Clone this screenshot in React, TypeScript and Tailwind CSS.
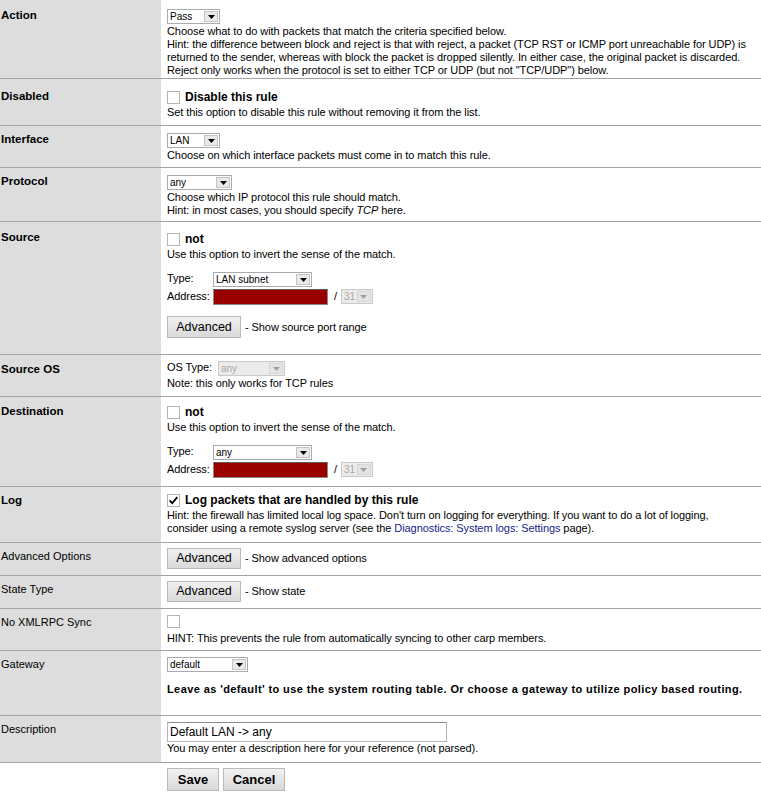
import React from "react";

type SelectProps = {
  value: string;
  className: string;
  disabled?: boolean;
};

function Select({ value, className, disabled }: SelectProps) {
  return (
    <div
      className={`flex h-[15px] shrink-0 items-stretch border text-[10px] leading-[13px] tracking-normal ${
        disabled ? "border-[#c9c9c9] bg-[#ebebeb] text-[#a8a8a8]" : "border-[#a5acb2] bg-white text-black"
      } ${className}`}
    >
      <span className="min-w-0 flex-1 overflow-hidden whitespace-nowrap pl-[2px]">{value}</span>
      <span
        className={`m-[1px] flex w-[14px] shrink-0 items-center justify-center border ${
          disabled ? "border-[#d6d6d6] bg-[#e4e4e4]" : "border-[#c4c4c4] bg-[#e9e9e9]"
        }`}
      >
        <svg width="7" height="4" viewBox="0 0 7 4">
          <path d="M0 0h7L3.5 4z" fill={disabled ? "#a0a0a0" : "#000"} />
        </svg>
      </span>
    </div>
  );
}

function Checkbox({ checked }: { checked?: boolean }) {
  return (
    <span className="flex h-[13px] w-[13px] shrink-0 items-center justify-center border border-[#b4b4b4] bg-white">
      {checked && (
        <svg width="13" height="13" viewBox="0 0 13 13">
          <path d="M2 6.5 L5 9.5 L11 2.5" stroke="#000" strokeWidth="2.2" fill="none" />
        </svg>
      )}
    </span>
  );
}

function Button({ children, className }: { children: React.ReactNode; className: string }) {
  return (
    <span
      className={`flex items-center justify-center border border-[#b9b9b9] bg-gradient-to-b from-[#f1f1f1] to-[#d9d9d9] tracking-normal text-black ${className}`}
    >
      {children}
    </span>
  );
}

type RowProps = {
  label: string;
  bold?: boolean;
  labelPad: string;
  pad: string;
  children: React.ReactNode;
};

function Row({ label, bold, labelPad, pad, children }: RowProps) {
  return (
    <div className="flex border-b border-[#a3a3a3]">
      <div
        className={`w-[161px] shrink-0 bg-[#dddddd] pl-[1px] leading-[14px] ${
          bold ? "text-[11.5px] font-bold" : "text-[11px]"
        } ${labelPad}`}
      >
        {label}
      </div>
      <div className={`min-w-0 flex-1 pl-[6px] text-[11px] leading-[13px] tracking-[-0.08px] ${pad}`}>
        {children}
      </div>
    </div>
  );
}

function AddressBlock({ type }: { type: string }) {
  return (
    <div className="flex flex-col">
      <div className="flex h-[16px] items-start">
        <span className="w-[46px]">Type:</span>
        <Select value={type} className="w-[99px]" />
      </div>
      <div className="flex h-[17px] items-center">
        <span className="w-[46px]">Address:</span>
        <span className="h-[16px] w-[115px] border border-[#8a8a8a] border-t-[#5a5a5a] bg-[#990000]" />
        <span className="ml-[6px] mr-[4px]">/</span>
        <Select value="31" className="w-[32px]" disabled />
      </div>
    </div>
  );
}

export default function App() {
  return (
    <div className="min-h-[808px] w-[761px] bg-white font-['Liberation_Sans',Arial,sans-serif] text-black">
      <Row label="Action" bold labelPad="pt-[8px]" pad="pt-[9px] pb-[1px]">
        <Select value="Pass" className="mb-[1px] w-[53px]" />
        <div className="whitespace-nowrap">
          Choose what to do with packets that match the criteria specified below.
          <br />
          Hint: the difference between block and reject is that with reject, a packet (TCP RST or ICMP port unreachable for UDP) is
          <br />
          returned to the sender, whereas with block the packet is dropped silently. In either case, the original packet is discarded.
          <br />
          Reject only works when the protocol is set to either TCP or UDP (but not "TCP/UDP") below.
        </div>
      </Row>

      <Row label="Disabled" bold labelPad="pt-[10px]" pad="pt-[9px] pb-[6px]">
        <div className="flex h-[18px] items-center gap-[5px]">
          <Checkbox />
          <span className="text-[12px] font-bold tracking-normal">Disable this rule</span>
        </div>
        <div>Set this option to disable this rule without removing it from the list.</div>
      </Row>

      <Row label="Interface" bold labelPad="pt-[6px]" pad="pt-[7px] pb-[5px]">
        <Select value="LAN" className="mb-[1px] w-[53px]" />
        <div>Choose on which interface packets must come in to match this rule.</div>
      </Row>

      <Row label="Protocol" bold labelPad="pt-[6px]" pad="pt-[7px] pb-[4px]">
        <Select value="any" className="mb-[1px] w-[65px]" />
        <div>
          Choose which IP protocol this rule should match.
          <br />
          Hint: in most cases, you should specify <i>TCP</i> here.
        </div>
      </Row>

      <Row label="Source" bold labelPad="pt-[8px]" pad="pt-[8px] pb-[16px]">
        <div className="flex h-[18px] items-center gap-[5px]">
          <Checkbox />
          <span className="text-[12px] font-bold tracking-normal">not</span>
        </div>
        <div>Use this option to invert the sense of the match.</div>
        <div className="h-[11px]" />
        <AddressBlock type="LAN subnet" />
        <div className="h-[11px]" />
        <div className="flex items-center">
          <Button className="h-[22px] w-[74px] text-[12.5px]">Advanced</Button>
          <span className="ml-[4px]">- Show source port range</span>
        </div>
      </Row>

      <Row label="Source OS" bold labelPad="pt-[7px]" pad="pt-[6px] pb-[6px]">
        <div className="flex h-[16px] items-start">
          <span className="w-[51px]">OS Type:</span>
          <Select value="any" className="w-[67px]" disabled />
        </div>
        <div>Note: this only works for TCP rules</div>
      </Row>

      <Row label="Destination" bold labelPad="pt-[7px]" pad="pt-[6px] pb-[8px]">
        <div className="flex h-[18px] items-center gap-[5px]">
          <Checkbox />
          <span className="text-[12px] font-bold tracking-normal">not</span>
        </div>
        <div>Use this option to invert the sense of the match.</div>
        <div className="h-[11px]" />
        <AddressBlock type="any" />
      </Row>

      <Row label="Log" bold labelPad="pt-[6px]" pad="pt-[4px] pb-[7px]">
        <div className="flex h-[18px] items-center gap-[5px]">
          <Checkbox checked />
          <span className="text-[12px] font-bold tracking-normal">Log packets that are handled by this rule</span>
        </div>
        <div className="whitespace-nowrap">
          Hint: the firewall has limited local log space. Don't turn on logging for everything. If you want to do a lot of logging,
          <br />
          consider using a remote syslog server (see the <span className="text-[#1a1a8c]">Diagnostics: System logs: Settings</span> page).
        </div>
      </Row>

      <Row label="Advanced Options" labelPad="pt-[6px]" pad="pt-[5px] pb-[6px]">
        <div className="flex items-center">
          <Button className="h-[21px] w-[74px] text-[12.5px]">Advanced</Button>
          <span className="ml-[4px]">- Show advanced options</span>
        </div>
      </Row>

      <Row label="State Type" labelPad="pt-[6px]" pad="pt-[5px] pb-[6px]">
        <div className="flex items-center">
          <Button className="h-[21px] w-[74px] text-[12.5px]">Advanced</Button>
          <span className="ml-[4px]">- Show state</span>
        </div>
      </Row>

      <Row label="No XMLRPC Sync" labelPad="pt-[6px]" pad="pt-[6px] pb-[5px]">
        <div className="flex h-[17px] items-start">
          <Checkbox />
        </div>
        <div>HINT: This prevents the rule from automatically syncing to other carp members.</div>
      </Row>

      <Row label="Gateway" labelPad="pt-[6px]" pad="pt-[6px] pb-[19px]">
        <Select value="default" className="w-[81px]" />
        <div className="h-[11px]" />
        <div className="whitespace-nowrap font-bold tracking-[0.4px]">
          Leave as 'default' to use the system routing table. Or choose a gateway to utilize policy based routing.
        </div>
      </Row>

      <Row label="Description" labelPad="pt-[6px]" pad="pt-[6px] pb-[7px]">
        <div className="flex h-[20px] w-[280px] items-center border border-[#b4b4b4] border-t-[#8e8e8e] bg-white pl-[2px] text-[12px] tracking-normal">
          Default LAN -&gt; any
        </div>
        <div>You may enter a description here for your reference (not parsed).</div>
      </Row>

      <div className="flex gap-[4px] pl-[167px] pt-[5px]">
        <Button className="h-[23px] w-[52px] text-[13px] font-bold">Save</Button>
        <Button className="h-[23px] w-[62px] text-[13px] font-bold">Cancel</Button>
      </div>
    </div>
  );
}
